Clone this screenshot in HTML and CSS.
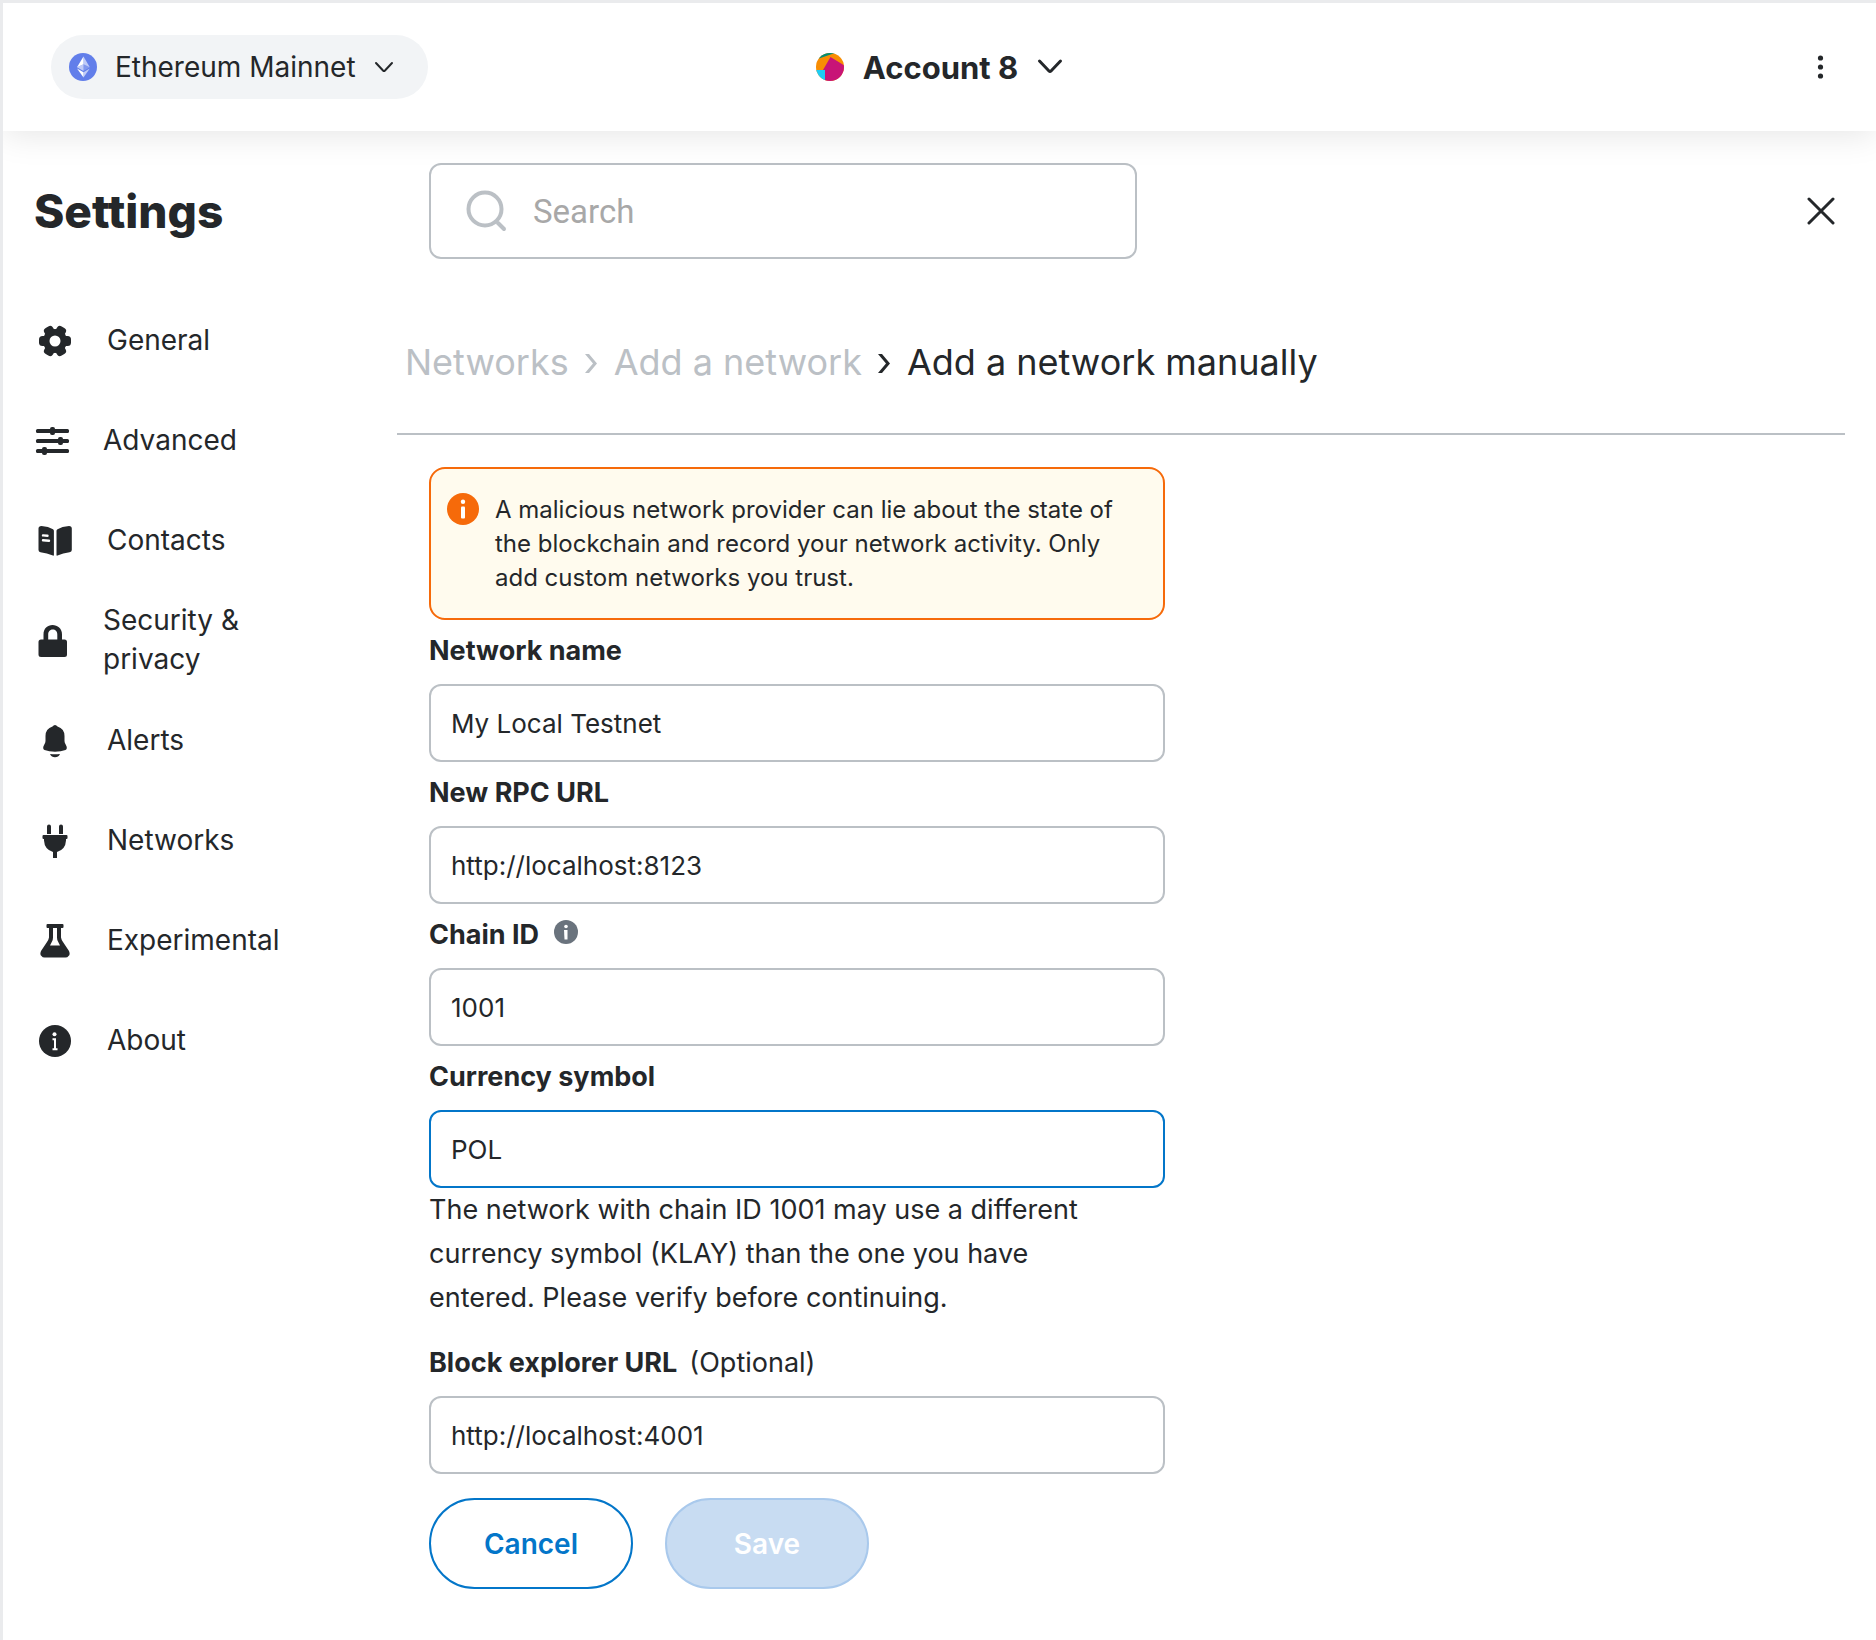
FILE: index.html
```html
<!DOCTYPE html>
<html lang="en">
<head>
<meta charset="utf-8">
<meta name="viewport" content="width=device-width, initial-scale=1">
<title>Settings</title>
<link rel="stylesheet" href="styles.css">
</head>
<body>
<header class="topbar">
  <button class="network-picker" type="button">
    <svg width="28" height="28" viewBox="0 0 28 28" aria-hidden="true">
      <circle cx="14" cy="14" r="14" fill="#627eea"/>
      <path d="M14.5 3.5v7.800l6.300 2.900z" fill="#fff" fill-opacity=".6"/>
      <path d="M14.500 3.500 8 14.200l6.500-2.900z" fill="#fff"/>
      <path d="M14.500 19.200v5.300l6.300-8.900z" fill="#fff" fill-opacity=".6"/>
      <path d="M14.500 24.500v-5.300L8 15.600z" fill="#fff"/>
      <path d="m14.500 18 6.300-3.800-6.300-2.900z" fill="#fff" fill-opacity=".2"/>
      <path d="m8 14.200 6.500 3.800v-6.700z" fill="#fff" fill-opacity=".6"/>
    </svg>
    <span>Ethereum Mainnet</span>
    <svg width="20" height="20" viewBox="0 0 20 20" aria-hidden="true"><path d="m2 6 7 7.500q1 1 2 0L18 6" class="line"/></svg>
  </button>
  <button class="account-picker" type="button">
    <svg width="28" height="28" viewBox="0 0 28 28" aria-hidden="true">
      <defs><clipPath id="avatar"><circle cx="14" cy="14" r="14"/></clipPath></defs>
      <g clip-path="url(#avatar)">
        <path fill="#f88d03" d="M0 0h28v28H0z"/>
        <path fill="#018e77" d="M0 0h20L16 1 3 5.500z"/>
        <path fill="#1ecdf5" d="M0 17h9v11H0z"/>
        <path fill="#c81477" d="M14.500 4 30 13.500V30H9V17H7z"/>
      </g>
    </svg>
    <span>Account 8</span>
    <svg width="26" height="26" viewBox="0 0 26 26" aria-hidden="true"><path d="m2.500 7 9.500 10q1 1 2 0l9.500-10" class="line"/></svg>
  </button>
  <button class="menu-button" type="button" aria-label="Account options">
    <svg width="16" height="28" viewBox="0 0 16 28" aria-hidden="true"><circle cx="8.500" cy="5" r="2.600"/><circle cx="8.500" cy="14" r="2.600"/><circle cx="8.500" cy="23" r="2.600"/></svg>
  </button>
</header>

<div class="settings">
  <h1 class="title">Settings</h1>
  <div class="toolbar">
    <label class="search">
      <svg width="44" height="44" viewBox="0 0 44 44" aria-hidden="true"><circle class="search-line" cx="20" cy="20" r="16.500"/><path class="search-line" d="m33 34 6 6"/></svg>
      <input type="search" placeholder="Search" aria-label="Search">
    </label>
    <button class="close" type="button" aria-label="Close">
      <svg width="28" height="28" viewBox="0 0 28 28" aria-hidden="true"><path d="m2 2 24 24M26 2 2 26" class="line"/></svg>
    </button>
  </div>

  <nav class="tabs" aria-label="Settings sections">
    <a class="tab" href="#general">
      <svg width="40" height="40" viewBox="0 0 40 40" aria-hidden="true">
        <circle cx="20" cy="21" r="12"/>
        <rect x="4" y="16" width="32" height="10" rx="3.500"/>
        <rect x="4" y="16" width="32" height="10" rx="3.500" transform="rotate(60 20 21)"/>
        <rect x="4" y="16" width="32" height="10" rx="3.500" transform="rotate(120 20 21)"/>
        <circle cx="20" cy="21" r="5.500" fill="#fff"/>
      </svg>
      <span>General</span>
    </a>
    <a class="tab" href="#advanced">
      <svg width="36" height="40" viewBox="0 0 36 40" aria-hidden="true">
        <rect x="1" y="9" width="33" height="4" rx="1.500"/><rect x="1" y="19" width="33" height="4" rx="1.500"/><rect x="1" y="29" width="33" height="4" rx="1.500"/>
        <rect x="15" y="7" width="5" height="8" rx="2"/><rect x="23" y="17" width="5" height="8" rx="2"/><rect x="7" y="27" width="5" height="8" rx="2"/>
      </svg>
      <span>Advanced</span>
    </a>
    <a class="tab" href="#contacts">
      <svg width="40" height="40" viewBox="0 0 40 40" aria-hidden="true">
        <path fill-rule="evenodd" d="M6.500 6q7 .500 11.500 3.200.900.500.900 1.500V35q0 1-1 .600Q12 33 5.500 32.200q-2-.200-2-2.200V8.500Q3.500 6 6.500 6zM8 14.200q-1.200 0-1.200 1.200T8 16.600l4.500.300q1.200 0 1.200-1.200t-1.200-1.200zM8 19q-1.200 0-1.200 1.200T8 21.400l6 .500q1.200 0 1.200-1.200T14 19.500z"/>
        <path d="M34 6q-7 .500-11.500 3.200-1 .500-1 1.500V35q0 1 1 .600Q28 33 34.500 32.200q2.300-.200 2.300-2.200V8.500Q36.800 6 34 6z"/>
      </svg>
      <span>Contacts</span>
    </a>
    <a class="tab" href="#security">
      <svg width="36" height="40" viewBox="0 0 36 40" aria-hidden="true">
        <path d="M8.500 19.500v-5C8.500 8.500 12.500 5 17.500 5s9.500 3.500 9.500 9.500v5h2.500q2.500 0 2.500 2.500v12.500q0 2.500-2.500 2.500H6q-2.500 0-2.500-2.500V22q0-2.500 2.500-2.500zm4.700 0h9.100v-5c0-3.500-2-5-4.500-5s-4.600 1.500-4.600 5z"/>
      </svg>
      <span>Security &amp;<br>privacy</span>
    </a>
    <a class="tab" href="#alerts">
      <svg width="40" height="40" viewBox="0 0 40 40" aria-hidden="true">
        <path d="M20 5q1.500 0 2.500 1.500 7 2.200 7 9.500v5q0 1.700 1.300 3.700 2.200 3.800-.300 5.300-4.500 1.700-10.500 1.700T9.500 30q-2.500-1.500-.300-5.300 1.300-2 1.300-3.700v-5q0-7.300 7-9.500Q18.500 5 20 5zM15 34q5 .700 10 0-1.500 3.200-5 3.200T15 34z"/>
      </svg>
      <span>Alerts</span>
    </a>
    <a class="tab" href="#networks">
      <svg width="40" height="40" viewBox="0 0 40 40" aria-hidden="true">
        <path d="M12 6.500q0-2 2-2t2 2V14h-4zM24 6.500q0-2 2-2t2 2V14h-4zM8.500 15h23q1 0 1 1v2q0 1-1 1H31v1.500q-.500 9-9 11.500v6h-4v-6q-8.500-2.500-9-11.500V19h-.500q-1 0-1-1v-2q0-1 1-1z"/>
      </svg>
      <span>Networks</span>
    </a>
    <a class="tab" href="#experimental">
      <svg width="40" height="40" viewBox="0 0 40 40" aria-hidden="true">
        <path fill-rule="evenodd" d="M12.500 4h15q1 0 1 1v2q0 1-1 1H26v9.500q.300 2 2 4.500l6 9q1.500 3.500-.500 5-1 1.500-3 1.500h-21q-2 0-3-1.500-2-1.500-.500-5l6-9q1.700-2.500 2-4.500V8h-1.500q-1 0-1-1V5q0-1 1-1zM18 8v9.500q0 2-1 4l-2 4h10l-2-4q-1-2-1-4V8z"/>
      </svg>
      <span>Experimental</span>
    </a>
    <a class="tab" href="#about">
      <svg width="40" height="40" viewBox="0 0 40 40" aria-hidden="true">
        <circle cx="20" cy="21" r="16"/><circle cx="19.500" cy="14.300" r="2" fill="#fff"/><path d="M17.500 18.300H21v10h1.500v2h-5v-2H19v-8h-1.500z" fill="#fff"/>
      </svg>
      <span>About</span>
    </a>
  </nav>

  <main class="content">
    <nav class="breadcrumbs" aria-label="Breadcrumb">
      <a href="#networks">Networks</a>
      <svg width="13" height="24" viewBox="0 0 13 24" aria-hidden="true"><path d="M0 4h4l8 9.500L4 23H0l8-9.500z" fill="#bbc0c5"/></svg>
      <a href="#add-network">Add a network</a>
      <svg width="13" height="24" viewBox="0 0 13 24" aria-hidden="true"><path d="M0 4h4l8 9.500L4 23H0l8-9.500z"/></svg>
      <span>Add a network manually</span>
    </nav>

    <form class="form">
      <div class="alert" role="note">
        <svg width="32" height="32" viewBox="0 0 32 32" aria-hidden="true"><circle cx="16" cy="16" r="16" fill="#f66a0a"/><circle cx="16" cy="8.800" r="2.200" fill="#fff"/><rect x="14" y="13.500" width="4" height="12" rx="1" fill="#fff"/></svg>
        <p class="alert-text">A malicious network provider can lie about the state of the blockchain and record your network activity. Only add custom networks you trust.</p>
      </div>

      <label class="label" for="name">Network name</label>
      <input class="field" id="name" type="text" value="My Local Testnet">

      <label class="label" for="rpc">New RPC URL</label>
      <input class="field" id="rpc" type="text" value="http://localhost:8123">

      <label class="label" for="chain">Chain ID
        <svg width="28" height="28" viewBox="0 0 28 28" aria-hidden="true"><circle cx="15" cy="12" r="12" fill="#6a737d"/><circle cx="15" cy="6.500" r="1.800" fill="#fff"/><path d="M13 10h3.500v9.500h-3z" fill="#fff"/></svg>
      </label>
      <input class="field" id="chain" type="text" value="1001">

      <label class="label" for="symbol">Currency symbol</label>
      <input class="field field-active" id="symbol" type="text" value="POL" aria-describedby="symbol-help">
      <p class="help" id="symbol-help">The network with chain ID 1001 may use a different currency symbol (KLAY) than the one you have entered. Please verify before continuing.</p>

      <label class="label" for="explorer">Block explorer URL <span class="optional">(Optional)</span></label>
      <input class="field" id="explorer" type="text" value="http://localhost:4001">

      <div class="actions">
        <button class="button button-secondary" type="button">Cancel</button>
        <button class="button button-primary" type="submit" disabled>Save</button>
      </div>
    </form>
  </main>
</div>
</body>
</html>
```
FILE: styles.css
```css
* {
  box-sizing: border-box;
}

body {
  margin: 0;
  min-height: 100vh;
  border-top: 3px solid #eaebed;
  border-left: 3px solid #eaebed;
  background: #fff;
  color: #24272a;
  font-family: Inter, "Liberation Sans", sans-serif;
  font-size: 28px;
}

button {
  border: 0;
  padding: 0;
  background: none;
  color: inherit;
  font: inherit;
  cursor: pointer;
}

a {
  color: inherit;
  text-decoration: none;
}

svg {
  flex: none;
  fill: #24272a;
}

.line {
  fill: none;
  stroke: #24272a;
  stroke-width: 2;
  stroke-linecap: round;
}

/* Top bar */
.topbar {
  position: relative;
  z-index: 1;
  display: grid;
  grid-template-columns: 1fr auto 1fr;
  align-items: center;
  height: 128px;
  padding: 0 48px;
  background: #fff;
  box-shadow: 0 4px 32px rgba(0, 0, 0, 0.1);
}

.network-picker {
  display: flex;
  justify-self: start;
  align-items: center;
  gap: 18px;
  height: 64px;
  padding: 0 34px 0 18px;
  border-radius: 32px;
  background: #f2f4f6;
}

.account-picker {
  display: flex;
  align-items: center;
  gap: 19px;
  font-size: 31px;
  font-weight: 700;
}

.account-picker .line {
  stroke-width: 3;
}

.menu-button {
  display: flex;
  justify-self: end;
}

/* Settings page */
.settings {
  display: grid;
  grid-template-columns: 394px 1fr;
  padding: 32px 31px 32px 0;
}

.title {
  align-self: center;
  margin: 0;
  padding-left: 31px;
  font-size: 46px;
  font-weight: 800;
}

.toolbar {
  display: flex;
  align-items: center;
  justify-content: space-between;
  padding-left: 32px;
}

.search {
  display: flex;
  align-items: center;
  flex: 0 1 708px;
  gap: 24px;
  height: 96px;
  padding: 0 34px;
  border: 2px solid #bbc0c5;
  border-radius: 12px;
  min-width: 0;
}

.search-line {
  fill: none;
  stroke: #bbc0c5;
  stroke-width: 4;
  stroke-linecap: round;
}

.search input {
  flex: 1;
  min-width: 0;
  padding: 0;
  border: 0;
  outline: 0;
  background: none;
  font: 33px Roboto, sans-serif;
}

.search input::placeholder {
  color: #a8a8a8;
}

.close {
  display: flex;
  align-items: center;
  justify-content: center;
  width: 48px;
  height: 48px;
}

.close .line {
  stroke-width: 3;
}

/* Side tabs */
.tabs {
  padding: 31px 32px 0;
}

.tab {
  display: flex;
  align-items: center;
  gap: 32px;
  height: 100px;
  line-height: 39px;
}

/* Content */
.breadcrumbs {
  display: flex;
  align-items: center;
  gap: 16px;
  height: 176px;
  padding: 32px 8px 0;
  border-bottom: 2px solid #bbc0c5;
  font-size: 36px;
}

.breadcrumbs a {
  color: #bbc0c5;
}

.form {
  max-width: 768px;
  padding: 32px 0 0 32px;
}

.alert {
  display: flex;
  gap: 16px;
  padding: 24px 24px 23px 16px;
  border: 2px solid #f66a0a;
  border-radius: 16px;
  background: #fffbee;
}

.alert-text {
  margin: 0;
  font-size: 24px;
  line-height: 34px;
}

.label {
  display: flex;
  align-items: center;
  gap: 12px;
  height: 64px;
  padding-bottom: 4px;
  font-size: 27px;
  font-weight: 700;
}

.optional {
  font-weight: 400;
}

.field {
  display: block;
  width: 100%;
  height: 78px;
  padding: 0 20px;
  border: 2px solid #bbc0c5;
  border-radius: 12px;
  outline: 0;
  background: #fff;
  color: inherit;
  font: inherit;
  font-size: 26px;
}

.field-active {
  border-color: #0376c9;
}

.help {
  max-width: 700px;
  margin: 0 0 12px;
  font-size: 27px;
  line-height: 44px;
}

.actions {
  display: flex;
  gap: 32px;
  padding-top: 24px;
}

.button {
  width: 204px;
  height: 91px;
  border: 2px solid #0376c9;
  border-radius: 46px;
  color: #0376c9;
  font-weight: 600;
}

.button-primary {
  border-color: #a9c9ec;
  background: #c8dcf2;
  color: #fff;
}
```
